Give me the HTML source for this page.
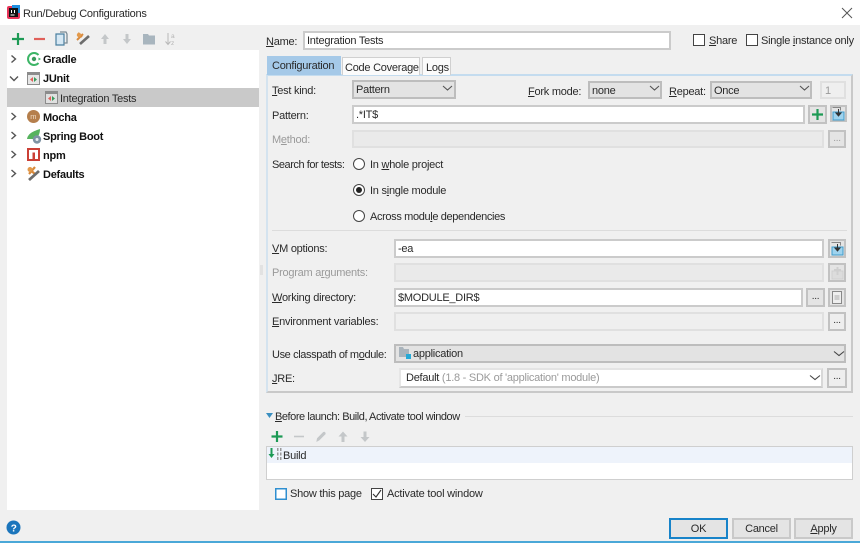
<!DOCTYPE html>
<html><head><meta charset="utf-8"><style>
html,body{margin:0;padding:0}
body{width:860px;height:543px;position:relative;overflow:hidden;background:#f0f0f0;font-family:"Liberation Sans",sans-serif;font-size:11px;letter-spacing:-.25px;color:#2a2a2a}
.a,.t,.i,svg{position:absolute}
.t{white-space:nowrap;line-height:14px;margin-top:1px}
.i{box-sizing:border-box;border:2px solid #cbcbcb;background:#fff;padding-left:2px;line-height:17px;white-space:nowrap}
.d{background:#eaeaea;border-color:#e0e0e0}
.s{box-sizing:border-box;border:2px solid #bdbdbd;background:#e3e3e3;padding-left:2px;line-height:16px;white-space:nowrap}
.b{box-sizing:border-box;border:2px solid #c2c2c2;background:#e4e4e4;text-align:center;line-height:13px}
.g{color:#9a9a9a}
.c{position:absolute;box-sizing:border-box;width:12px;height:12px;border:1px solid #444;background:#fff}
.r{position:absolute;box-sizing:border-box;width:12px;height:12px;border:1px solid #444;border-radius:50%;background:#fff}
.tree{font-weight:bold;color:#111}
u{text-underline-offset:1px}
</style></head><body>
<div class="a" style="left:0;top:0;width:860px;height:25px;background:#fff"></div>
<svg style="left:6px;top:5px" width="15" height="15" viewBox="0 0 15 15"><rect x="1" y="1" width="13" height="13" rx="2" fill="#e8355a"/><rect x="6" y="0" width="8" height="8" fill="#1f8fe0"/><rect x="3" y="3" width="9" height="9" fill="#111"/><rect x="4.500" y="9.500" width="4" height="1" fill="#fff"/><rect x="5" y="5" width="1" height="3" fill="#fff"/><rect x="8" y="5" width="1" height="3" fill="#fff"/></svg>
<div class="t" style="left:23px;top:6px">Run/Debug Configurations</div>
<svg style="left:841px;top:7px" width="12" height="12"><path d="M1 1L11 11M11 1L1 11" stroke="#555" stroke-width="1"/></svg>

<!-- left toolbar -->
<svg style="left:10px;top:31px" width="170" height="16" viewBox="0 0 170 16">
<path d="M8 2v12M2 8h12" stroke="#1d9a55" stroke-width="2.200"/>
<path d="M24 8h11" stroke="#e0605a" stroke-width="2.200"/>
<path d="M46 3h8v11h-8z" fill="#d6e8f4" stroke="#4a7f9f" stroke-width="1.200"/><path d="M50 1h6l1 2v9h-3" fill="none" stroke="#7a8a94" stroke-width="1.300"/>
<path d="M68 2l4 4M73 3l-6 6" stroke="#d98a3c" stroke-width="2"/><path d="M70 13l9-8" stroke="#6d6d6d" stroke-width="2.600"/><circle cx="69" cy="4" r="2.200" fill="#e39a4c"/>
<path d="M95 3l-4 5h2.500v5h3v-5h2.500z" fill="#c4c7c9"/>
<path d="M117 13l-4-5h2.500v-5h3v5h2.500z" fill="#c4c7c9"/>
<path d="M133 3h5l1 1.500h6v9h-12z" fill="#a8b5be"/>
<path d="M158 2v11M155.500 10.500l2.500 3 2.500-3" fill="none" stroke="#b8b8b8" stroke-width="1"/>
<text x="161" y="7" font-size="6.500" fill="#b4b4b4" font-family="Liberation Sans">a</text><text x="161" y="14" font-size="6.500" fill="#b4b4b4" font-family="Liberation Sans">z</text>
</svg>

<!-- tree -->
<div class="a" style="left:7px;top:50px;width:252px;height:460px;background:#fff"></div>
<div class="a" style="left:7px;top:88px;width:252px;height:19px;background:#c9c9c9"></div>
<svg style="left:9px;top:53px" width="10" height="130"><g fill="none" stroke="#555" stroke-width="1.400"><path d="M2.500 2.500l4 3.500-4 3.500"/><path d="M1 23.500l4 4 4-4"/><path d="M2.500 60l4 3.500-4 3.500"/><path d="M2.500 79l4 3.500-4 3.500"/><path d="M2.500 98l4 3.500-4 3.500"/><path d="M2.500 117l4 3.500-4 3.500"/></g></svg>

<svg style="left:27px;top:52px" width="14" height="14"><path d="M11.500 3A6 6 0 1 0 11.500 11" fill="none" stroke="#3cb566" stroke-width="2"/><path d="M11.500 5.500l2.500 1.500-2.500 1.500z" fill="#3cb566"/><circle cx="7" cy="7" r="2.200" fill="#3a9a5c"/></svg>
<div class="t tree" style="left:43px;top:52px">Gradle</div>

<svg style="left:27px;top:72px" width="13" height="13"><rect x=".5" y=".5" width="12" height="12" fill="#e6e6e6" stroke="#8c8c8c"/><rect x=".5" y=".5" width="12" height="2.500" fill="#8c8c8c"/><path d="M6 5l-3 2.500 3 2.500z" fill="#e0605a"/><path d="M7 5l3 2.500-3 2.500z" fill="#3a9a5c"/></svg>
<div class="t tree" style="left:43px;top:71px">JUnit</div>

<svg style="left:45px;top:91px" width="13" height="13"><rect x=".5" y=".5" width="12" height="12" fill="#e0e0e0" stroke="#8c8c8c"/><rect x=".5" y=".5" width="12" height="2.500" fill="#8c8c8c"/><path d="M6 5l-3 2.500 3 2.500z" fill="#e0605a"/><path d="M7 5l3 2.500-3 2.500z" fill="#3a9a5c"/></svg>
<div class="t" style="left:60px;top:91px">Integration Tests</div>

<svg style="left:27px;top:110px" width="13" height="13"><circle cx="6.500" cy="6.500" r="6.500" fill="#b57f4c"/><text x="3.200" y="9.200" font-size="7.500" fill="#f0dcc4" font-family="Liberation Sans">m</text></svg>
<div class="t tree" style="left:43px;top:110px">Mocha</div>

<svg style="left:27px;top:129px" width="15" height="15"><path d="M0 10C1 4 7 2 13 0c0 5-2 9-6 10z" fill="#57b35e"/><circle cx="10" cy="10.500" r="4.200" fill="#7e93a3"/><circle cx="10" cy="10.500" r="1.500" fill="#e8eef2"/></svg>
<div class="t tree" style="left:43px;top:129px">Spring Boot</div>

<svg style="left:27px;top:148px" width="13" height="13"><rect width="13" height="13" fill="#cb4036"/><rect x="2" y="2" width="9" height="9" fill="#fff"/><rect x="5.500" y="4.500" width="2.500" height="6.500" fill="#cb4036"/></svg>
<div class="t tree" style="left:43px;top:148px">npm</div>

<svg style="left:27px;top:166px" width="14" height="15"><path d="M2 3l6 5M8 1L2 8" stroke="#d98a3c" stroke-width="2.200"/><circle cx="3" cy="3.500" r="2.500" fill="#e39a4c"/><path d="M2 14l10-9" stroke="#6d6d6d" stroke-width="2.800"/></svg>
<div class="t tree" style="left:43px;top:167px">Defaults</div>

<!-- splitter -->
<div class="a" style="left:260px;top:265px;width:3px;height:10px;background:#e2e2e2"></div>

<!-- name -->
<div class="t" style="left:266px;top:34px"><u>N</u>ame:</div>
<div class="i" style="left:303px;top:31px;width:368px;height:19px">Integration Tests</div>
<div class="c" style="left:693px;top:34px"></div>
<div class="t" style="left:709px;top:33px"><u>S</u>hare</div>
<div class="c" style="left:746px;top:34px"></div>
<div class="t" style="left:761px;top:33px">Single <u>i</u>nstance only</div>

<!-- panel -->
<div class="a" style="left:266px;top:74px;width:587px;height:319px;box-sizing:border-box;border:2px solid #c9c9c9;border-top:2px solid #c4dcef;border-left:2px solid #d4e3ef"></div>
<div class="a" style="left:267px;top:56px;width:74px;height:19px;background:#a5c9e8"></div>
<div class="t" style="left:272px;top:58px">Configuration</div>
<div class="a" style="left:342px;top:57px;width:78px;height:18px;box-sizing:border-box;background:#fbfbfb;border:1px solid #d0d0d0;border-bottom:0"></div>
<div class="t" style="left:345px;top:60px">Code Coverage</div>
<div class="a" style="left:422px;top:57px;width:29px;height:18px;box-sizing:border-box;background:#fbfbfb;border:1px solid #d0d0d0;border-bottom:0"></div>
<div class="t" style="left:426px;top:60px">Logs</div>

<div class="t" style="left:272px;top:83px"><u>T</u>est kind:</div>
<div class="a s" style="left:352px;top:80px;width:104px;height:19px">Pattern</div>
<div class="t" style="left:528px;top:84px"><u>F</u>ork mode:</div>
<div class="a s" style="left:588px;top:81px;width:74px;height:18px">none</div>
<div class="t" style="left:669px;top:84px"><u>R</u>epeat:</div>
<div class="a s" style="left:710px;top:81px;width:102px;height:18px">Once</div>
<svg style="left:435px;top:80px" width="380" height="20"><path d="M8 6l4.500 4 4.500-4M215 6l4.500 4 4.500-4M365 6l4.500 4 4.500-4" fill="none" stroke="#555" stroke-width="1.100"/></svg>
<div class="a i d g" style="left:820px;top:81px;width:26px;height:18px;padding-left:3px;background:#efefef">1</div>

<div class="t" style="left:272px;top:108px">Pattern:</div>
<div class="a i" style="left:352px;top:105px;width:453px;height:19px">.*IT$</div>
<div class="a b" style="left:808px;top:105px;width:19px;height:19px"></div>
<svg style="left:811px;top:108px" width="13" height="13"><path d="M6.500 1v11M1 6.500h11" stroke="#1d9a55" stroke-width="2.200"/></svg>
<div class="a b" style="left:830px;top:105px;width:17px;height:17px"></div>
<svg style="left:831px;top:106px" width="15" height="15"><path d="M1.500 1.500h8v3" fill="none" stroke="#888"/><rect x="2" y="6" width="11" height="8" fill="#9fd3ee" stroke="#3f9ccc"/><path d="M7.500 3v6M5 7l2.500 3 2.500-3z" fill="#333" stroke="#333"/></svg>

<div class="t g" style="left:272px;top:132px">M<u>e</u>thod:</div>
<div class="a i d" style="left:352px;top:130px;width:472px;height:18px"></div>
<div class="a b d g" style="left:828px;top:130px;width:18px;height:18px;font-size:10px">...</div>

<div class="t" style="left:272px;top:157px;letter-spacing:-.45px">Search for tests:</div>
<div class="r" style="left:353px;top:158px"></div>
<div class="t" style="left:370px;top:157px">In <u>w</u>hole project</div>
<div class="r" style="left:353px;top:184px"></div>
<div class="a" style="left:356px;top:187px;width:6px;height:6px;background:#222;border-radius:50%"></div>
<div class="t" style="left:370px;top:183px">In s<u>i</u>ngle module</div>
<div class="r" style="left:353px;top:210px"></div>
<div class="t" style="left:370px;top:209px;letter-spacing:-.36px">Across modu<u>l</u>e dependencies</div>
<div class="a" style="left:272px;top:230px;width:575px;height:1px;background:#dcdcdc"></div>

<div class="t" style="left:272px;top:241px"><u>V</u>M options:</div>
<div class="a i" style="left:394px;top:239px;width:430px;height:19px">-ea</div>
<div class="a b" style="left:828px;top:239px;width:18px;height:19px"></div>
<svg style="left:830px;top:241px" width="15" height="15"><path d="M1.500 1.500h9v3" fill="none" stroke="#888"/><rect x="2" y="6" width="11" height="8" fill="#9fd3ee" stroke="#3f9ccc"/><path d="M7.500 3v6M5 7l2.500 3 2.500-3z" fill="#333" stroke="#333"/></svg>

<div class="t g" style="left:272px;top:265px">Program a<u>r</u>guments:</div>
<div class="a i d" style="left:394px;top:263px;width:430px;height:19px"></div>
<div class="a b d" style="left:828px;top:263px;width:18px;height:19px"></div>
<svg style="left:830px;top:265px" width="15" height="15"><rect x="2" y="6" width="11" height="8" fill="#dcdcdc" stroke="#cfcfcf"/><path d="M7.500 2v8M4 5h7" stroke="#cfcfcf" stroke-width="2"/></svg>

<div class="t" style="left:272px;top:290px"><u>W</u>orking directory:</div>
<div class="a i" style="left:394px;top:288px;width:409px;height:19px">$MODULE_DIR$</div>
<div class="a b" style="left:806px;top:288px;width:19px;height:19px;font-size:10px">...</div>
<div class="a b" style="left:828px;top:288px;width:18px;height:19px"></div>
<svg style="left:832px;top:291px" width="10" height="13"><rect x=".5" y=".5" width="9" height="12" fill="#eee" stroke="#888"/><rect x="2.500" y="4" width="5" height="5" fill="#ccc"/></svg>

<div class="t" style="left:272px;top:314px"><u>E</u>nvironment variables:</div>
<div class="a i d" style="left:394px;top:312px;width:430px;height:19px;background:#efefef"></div>
<div class="a b" style="left:828px;top:312px;width:18px;height:19px;font-size:10px;background:#eee">...</div>

<div class="t" style="left:272px;top:347px;letter-spacing:-.38px">Use classpath of m<u>o</u>dule:</div>
<div class="a s" style="left:394px;top:344px;width:452px;height:19px;padding-left:17px">application</div>
<svg style="left:398px;top:346px" width="15" height="14"><path d="M1 1h4l1 2h5v8H1z" fill="#aab4bc"/><rect x="8" y="8" width="5" height="5" fill="#27a9d6"/></svg>
<svg style="left:833px;top:350px" width="12" height="8"><path d="M1 1.500l5 4 5-4" fill="none" stroke="#444" stroke-width="1.100"/></svg>

<div class="t" style="left:272px;top:371px"><u>J</u>RE:</div>
<div class="a i" style="left:399px;top:368px;width:424px;height:20px;padding-left:5px;line-height:17px;border-color:#e4e4e4 #d8d8d8 #cacaca #e6e6e6">Default <span class="g">(1.8 - SDK of 'application' module)</span></div>
<svg style="left:809px;top:374px" width="12" height="8"><path d="M1 1.500l5 4 5-4" fill="none" stroke="#444" stroke-width="1.100"/></svg>
<div class="a b" style="left:827px;top:368px;width:20px;height:20px;font-size:10px;background:#eee">...</div>

<!-- before launch -->
<svg style="left:266px;top:413px" width="7" height="6"><path d="M0 0h7L3.500 5z" fill="#3a8fc0"/></svg>
<div class="t" style="left:275px;top:409px;letter-spacing:-.45px"><u>B</u>efore launch: Build, Activate tool window</div>
<div class="a" style="left:465px;top:416px;width:388px;height:1px;background:#dcdcdc"></div>
<svg style="left:270px;top:429px" width="105" height="15"><path d="M7 2v11M1.500 7.500h11" stroke="#1d9a55" stroke-width="2.200"/><path d="M24 7.500h10" stroke="#c4c7c9" stroke-width="1.600"/><path d="M47 12l2-1 6-6-1.500-1.500-6 6zM54 3l1.500 1.500" fill="#c4c7c9" stroke="#c4c7c9"/><path d="M73 2.500l-4.500 5h3v5.500h3V7.500h3z" fill="#c4c7c9"/><path d="M95 13l-4.500-5h3V2.500h3V8h3z" fill="#c4c7c9"/></svg>
<div class="a" style="left:266px;top:446px;width:587px;height:34px;box-sizing:border-box;border:1px solid #cfcfcf;background:#fff"></div>
<div class="a" style="left:267px;top:447px;width:585px;height:16px;background:#eef3fb"></div>
<svg style="left:268px;top:447px" width="16" height="14"><path d="M3.500 1v7" stroke="#1d9a55" stroke-width="2"/><path d="M0.500 7h6L3.500 11z" fill="#1d9a55"/><g fill="#9a9a9a"><rect x="9" y="1" width="1.500" height="3"/><rect x="12" y="1" width="1.500" height="3"/><rect x="9" y="5.500" width="1.500" height="3"/><rect x="12" y="5.500" width="1.500" height="3"/><rect x="9" y="10" width="1.500" height="3"/><rect x="12" y="10" width="1.500" height="3"/></g></svg>
<div class="t" style="left:283px;top:448px">Build</div>
<div class="c" style="left:275px;top:488px;border:1px solid #2f8fd0;box-shadow:inset 0 0 0 .5px #2f8fd0"></div>
<div class="t" style="left:290px;top:486px">Show this page</div>
<div class="c" style="left:371px;top:488px"></div>
<svg style="left:372px;top:489px" width="10" height="10"><path d="M1 5l3 3 5-7" fill="none" stroke="#333" stroke-width="1.100"/></svg>
<div class="t" style="left:387px;top:486px;letter-spacing:-.2px">Activate tool window</div>

<!-- footer -->
<svg style="left:6px;top:520px" width="15" height="15"><circle cx="7.500" cy="7.500" r="7" fill="#1b75bc"/><text x="4.800" y="11.500" font-size="10" font-weight="bold" fill="#fff" font-family="Liberation Sans">?</text></svg>
<div class="a b" style="left:669px;top:518px;width:59px;height:21px;line-height:18px;border-color:#1783c9">OK</div>
<div class="a b" style="left:732px;top:518px;width:59px;height:21px;line-height:18px;border-color:#c9c9c9">Cancel</div>
<div class="a b" style="left:794px;top:518px;width:59px;height:21px;line-height:18px;border-color:#c9c9c9"><u>A</u>pply</div>
<div class="a" style="left:0;top:541px;width:860px;height:2px;background:#4aa8d8"></div>
</body></html>
